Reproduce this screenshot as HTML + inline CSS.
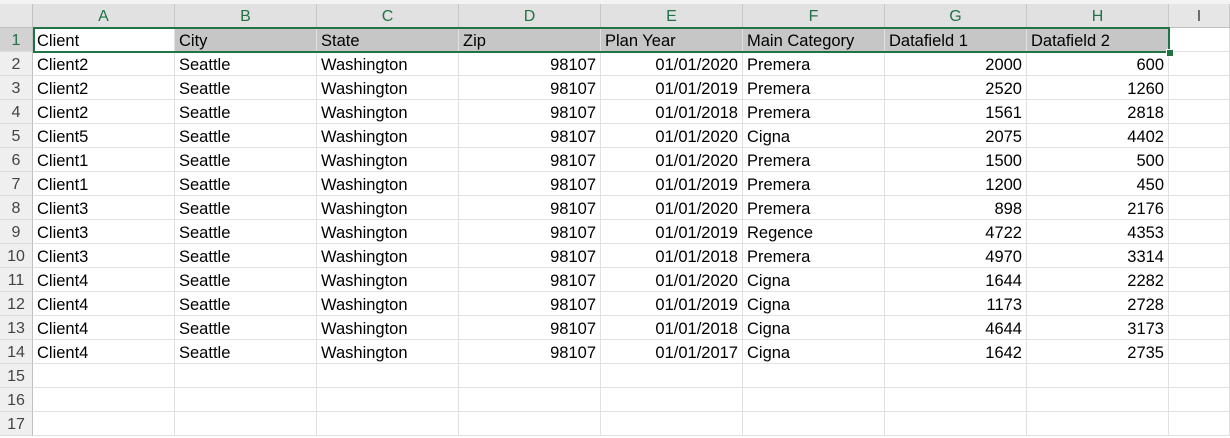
<!DOCTYPE html><html><head><style>
body{margin:0;width:1230px;height:426px;overflow:hidden;background:#fff;font-family:"Liberation Sans",Calibri,sans-serif;position:relative}
.c{position:absolute;box-sizing:border-box;height:24px;line-height:26px;font-size:16.5px;color:#000;padding:0 4px;white-space:nowrap;overflow:hidden;border-right:1px solid #e1e1e1;border-bottom:1px solid #e1e1e1}
.r{text-align:right}
.h{position:absolute;box-sizing:border-box;top:4px;height:24px;line-height:26px;text-align:center;font-size:16px;color:#217346;background:#e1e1e1;border-right:1px solid #c8c8c8;border-bottom:1px solid #999}
.n{position:absolute;left:0;width:33px;box-sizing:border-box;height:24px;line-height:26px;text-align:center;font-size:16px;color:#444;background:#efefef;border-right:1px solid #c0c0c0;border-bottom:1px solid #dcdcdc}
.g{background:#c6c6c6}
</style></head><body>
<div style="position:absolute;left:0;top:0;width:1230px;height:4px;background:#f3f3f3"></div>
<div style="position:absolute;left:0;top:4px;width:33px;height:24px;background:#e6e6e6;border-right:1px solid #c0c0c0;border-bottom:1px solid #bfbfbf;box-sizing:border-box"></div>
<div id="g"></div>
<script>
var data=[["Client","City","State","Zip","Plan Year","Main Category","Datafield 1","Datafield 2"],
["Client2","Seattle","Washington","98107","01/01/2020","Premera","2000","600"],
["Client2","Seattle","Washington","98107","01/01/2019","Premera","2520","1260"],
["Client2","Seattle","Washington","98107","01/01/2018","Premera","1561","2818"],
["Client5","Seattle","Washington","98107","01/01/2020","Cigna","2075","4402"],
["Client1","Seattle","Washington","98107","01/01/2020","Premera","1500","500"],
["Client1","Seattle","Washington","98107","01/01/2019","Premera","1200","450"],
["Client3","Seattle","Washington","98107","01/01/2020","Premera","898","2176"],
["Client3","Seattle","Washington","98107","01/01/2019","Regence","4722","4353"],
["Client3","Seattle","Washington","98107","01/01/2018","Premera","4970","3314"],
["Client4","Seattle","Washington","98107","01/01/2020","Cigna","1644","2282"],
["Client4","Seattle","Washington","98107","01/01/2019","Cigna","1173","2728"],
["Client4","Seattle","Washington","98107","01/01/2018","Cigna","4644","3173"],
["Client4","Seattle","Washington","98107","01/01/2017","Cigna","1642","2735"]];
var h="";
for(var i=0;i<9;i++){var x=33+142*i,w=i<8?142:61;
h+='<div class="h" style="left:'+x+'px;width:'+w+'px;'+(i==8?'background:#e6e6e6;color:#444;border-bottom-color:#bfbfbf':'')+'">'+"ABCDEFGHI"[i]+'</div>';}
for(var r=0;r<17;r++){var y=28+24*r;
h+='<div class="n" style="top:'+y+'px;'+(r==0?'background:#d2d2d2;color:#217346':'')+'">'+(r+1)+'</div>';
for(var c=0;c<9;c++){var x=33+142*c,w=c<8?142:61;var t=(data[r]&&c<8)?data[r][c]:"";
var right=r>0&&(c==3||c==4||c==6||c==7);
h+='<div class="c'+(right?' r':'')+(r==0&&c>0&&c<8?' g':'')+'" style="left:'+x+'px;top:'+y+'px;width:'+w+'px">'+t+'</div>';}}
h+='<div style="position:absolute;left:33px;top:27px;width:1137px;height:26px;box-sizing:border-box;border:2px solid #217346"></div>';
h+='<div style="position:absolute;left:1166px;top:49px;width:6px;height:6px;background:#217346;border:1px solid #fff"></div>';
document.getElementById("g").innerHTML=h;
</script>
</body></html>
